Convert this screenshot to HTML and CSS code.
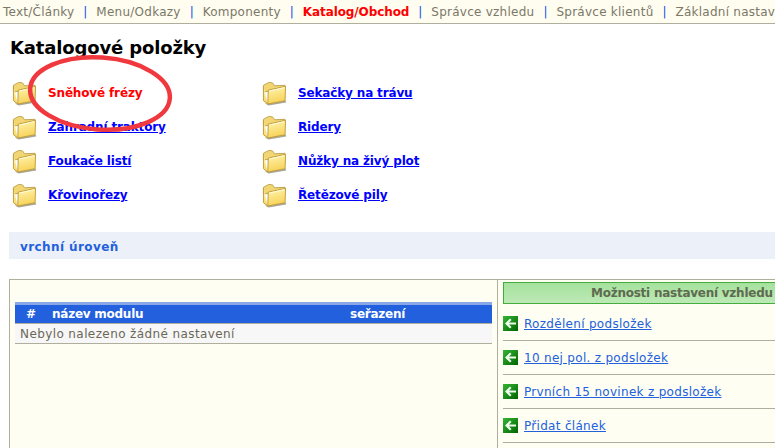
FILE: index.html
```html
<!DOCTYPE html>
<html lang="cs">
<head>
    <meta charset="UTF-8">
    <title>Katalogové položky</title>
    <link rel="stylesheet" href="styles.css">
</head>
<body>
    <!-- Top menu -->
    <div class="topnav">
        <a href="#">Text/Články</a><span class="sep">|</span>
        <a href="#">Menu/Odkazy</a><span class="sep">|</span>
        <a href="#">Komponenty</a><span class="sep">|</span>
        <a href="#" class="active">Katalog/Obchod</a><span class="sep">|</span>
        <a href="#">Správce vzhledu</a><span class="sep">|</span>
        <a href="#">Správce klientů</a><span class="sep">|</span>
        <a href="#">Základní nastavení</a>
    </div>

    <h1 class="title">Katalogové položky</h1>

    <svg width="0" height="0" class="defs">
        <defs>
            <linearGradient id="folderFill" x1="0" y1="0" x2="0.3" y2="1">
                <stop offset="0" stop-color="#fff8b8"/>
                <stop offset="1" stop-color="#f8d35a"/>
            </linearGradient>
            <linearGradient id="arrowFill" x1="0" y1="0" x2="1" y2="1">
                <stop offset="0" stop-color="#35b535"/>
                <stop offset="1" stop-color="#006400"/>
            </linearGradient>
            <symbol id="folder" viewBox="0 0 26 26">
                <path d="M3 24 L7 26 L25 23 L25 21 Z" fill="#a8a698"/>
                <path d="M1.5 5 L7 2 L11 2.5 L13 5.5 L24 5 L23 9 L1.5 12 Z" fill="#f2d673" stroke="#bfa44f"/>
                <path d="M1.5 6 L1.5 21 L6 24.5 L6.5 10 L24.5 6 L24 21 L6 24.5" fill="url(#folderFill)" stroke="#bf9c3a"/>
                <path d="M7.5 11 L23 7.5" fill="none" stroke="#fffbe0"/>
            </symbol>
            <symbol id="arrow" viewBox="0 0 15 15">
                <rect width="15" height="15" fill="url(#arrowFill)"/>
                <path d="M2 7.5 L7 2.5 L8.5 4 L6 6.5 L13 6.5 L13 8.5 L6 8.5 L8.5 11 L7 12.5 Z" fill="#eefcee"/>
            </symbol>
        </defs>
    </svg>

    <div class="folders">
        <a href="#" class="folder active"><svg class="folder-icon"><use href="#folder"/></svg><span>Sněhové frézy</span></a>
        <a href="#" class="folder"><svg class="folder-icon"><use href="#folder"/></svg><span>Sekačky na trávu</span></a>
        <a href="#" class="folder"><svg class="folder-icon"><use href="#folder"/></svg><span>Zahradní traktory</span></a>
        <a href="#" class="folder"><svg class="folder-icon"><use href="#folder"/></svg><span>Ridery</span></a>
        <a href="#" class="folder"><svg class="folder-icon"><use href="#folder"/></svg><span>Foukače listí</span></a>
        <a href="#" class="folder"><svg class="folder-icon"><use href="#folder"/></svg><span>Nůžky na živý plot</span></a>
        <a href="#" class="folder"><svg class="folder-icon"><use href="#folder"/></svg><span>Křovinořezy</span></a>
        <a href="#" class="folder"><svg class="folder-icon"><use href="#folder"/></svg><span>Řetězové pily</span></a>
    </div>

    <!-- Hand-drawn marker round the selected item -->
    <svg class="marker" width="160" height="90" viewBox="0 0 160 90">
        <ellipse cx="78" cy="39.5" rx="70" ry="36" fill="none" stroke="#f0393f" stroke-width="4.5" transform="rotate(4 78 39.5)"/>
    </svg>

    <div class="crumb">vrchní úroveň</div>

    <div class="panel">
        <div class="panel-left">
            <table class="modules">
                <thead>
                    <tr><th class="col-num">#</th><th class="col-name">název modulu</th><th class="col-order">seřazení</th></tr>
                </thead>
                <tbody>
                    <tr><td colspan="3">Nebylo nalezeno žádné nastavení</td></tr>
                </tbody>
            </table>
        </div>
        <div class="panel-right">
            <div class="options-head">Možnosti nastavení vzhledu</div>
            <div class="option"><svg class="arrow-icon"><use href="#arrow"/></svg><a href="#">Rozdělení podsložek</a></div>
            <div class="option"><svg class="arrow-icon"><use href="#arrow"/></svg><a href="#">10 nej pol. z podsložek</a></div>
            <div class="option"><svg class="arrow-icon"><use href="#arrow"/></svg><a href="#">Prvních 15 novinek z podsložek</a></div>
            <div class="option"><svg class="arrow-icon"><use href="#arrow"/></svg><a href="#">Přidat článek</a></div>
        </div>
    </div>
</body>
</html>
```

FILE: styles.css
```css
html, body {
    height: 100%;
    overflow: hidden;
}

body {
    position: relative;
    margin: 0;
    width: 775px;
    background: #fff;
    font-family: "DejaVu Sans", Verdana, sans-serif;
    font-size: 12px;
    color: #6b6758;
}

a {
    color: #2260dd;
}

.defs {
    position: absolute;
}

.topnav {
    display: flex;
    align-items: center;
    height: 23px;
    padding-left: 3px;
    background: #fffdf0;
    border-bottom: 1px solid #b0ae9c;
    white-space: nowrap;
    overflow: hidden;
}

.topnav a {
    color: #7b7868;
    text-decoration: none;
    letter-spacing: 0.25px;
    flex: none;
}

.topnav a.active {
    color: #f00;
    font-weight: bold;
    letter-spacing: -0.1px;
}

.sep {
    flex: none;
    width: 22px;
    text-align: center;
    color: #0a50e8;
}

.title {
    margin: 14px 0 0 10px;
    font-size: 18px;
    line-height: 20px;
    font-weight: bold;
    letter-spacing: -0.15px;
    color: #000;
}

.folders {
    display: grid;
    grid-template-columns: 250px 250px;
    grid-auto-rows: 34px;
    margin: 18px 0 0 12px;
}

.folder {
    display: flex;
    align-items: center;
    font-weight: bold;
    letter-spacing: -0.15px;
    color: #00f;
}

.folder span {
    margin-left: 11px;
}

.folder.active {
    color: #f00;
    text-decoration: none;
}

.folder-icon {
    width: 25px;
    height: 26px;
    flex: none;
}

.marker {
    position: absolute;
    left: 22px;
    top: 54px;
}

.crumb {
    margin: 20px 0 0 9px;
    height: 27px;
    line-height: 31px;
    padding-left: 11px;
    background: #ecf0f9;
    color: #2260dd;
    font-weight: bold;
    letter-spacing: 0.4px;
}

.panel {
    display: flex;
    margin: 20px 0 0 9px;
    height: 168px;
    background: #fefef2;
    border-top: 1px solid #b0ae9c;
    border-left: 1px solid #b0ae9c;
}

.panel-left {
    width: 477px;
    padding: 22px 5px 0 5px;
    border-right: 1px solid #b0ae9c;
    flex: none;
}

.modules {
    width: 100%;
    border-collapse: collapse;
}

.modules th {
    height: 15px;
    padding: 1px 0 2px 0;
    background: #2260dd;
    border-top: 3px solid #8aa8e8;
    border-bottom: 1px solid #b0ae9c;
    color: #fff;
    font-weight: bold;
    letter-spacing: -0.25px;
    text-align: left;
}

.modules .col-num {
    width: 37px;
    padding-left: 11px;
    box-sizing: border-box;
}

.modules .col-name {
    width: 298px;
}

.modules td {
    height: 19px;
    padding: 0 0 0 5px;
    background: #f7f7f7;
    border-bottom: 1px solid #b0ae9c;
    letter-spacing: 0.4px;
}

.panel-right {
    padding: 2px 0 0 5px;
    flex: 1;
    min-width: 0;
}

.options-head {
    height: 20px;
    line-height: 20px;
    margin-bottom: 3px;
    padding-left: 87px;
    border: 1px solid #45ad3e;
    border-right: 0;
    background: linear-gradient(#a5e29d, #bde9b6);
    color: #5f6b50;
    font-weight: bold;
    letter-spacing: -0.25px;
    white-space: nowrap;
}

.option {
    display: flex;
    align-items: center;
    height: 33px;
    border-bottom: 1px solid #b0ae9c;
    letter-spacing: 0.3px;
    white-space: nowrap;
}

.arrow-icon {
    width: 15px;
    height: 15px;
    margin-right: 6px;
    flex: none;
}
```
